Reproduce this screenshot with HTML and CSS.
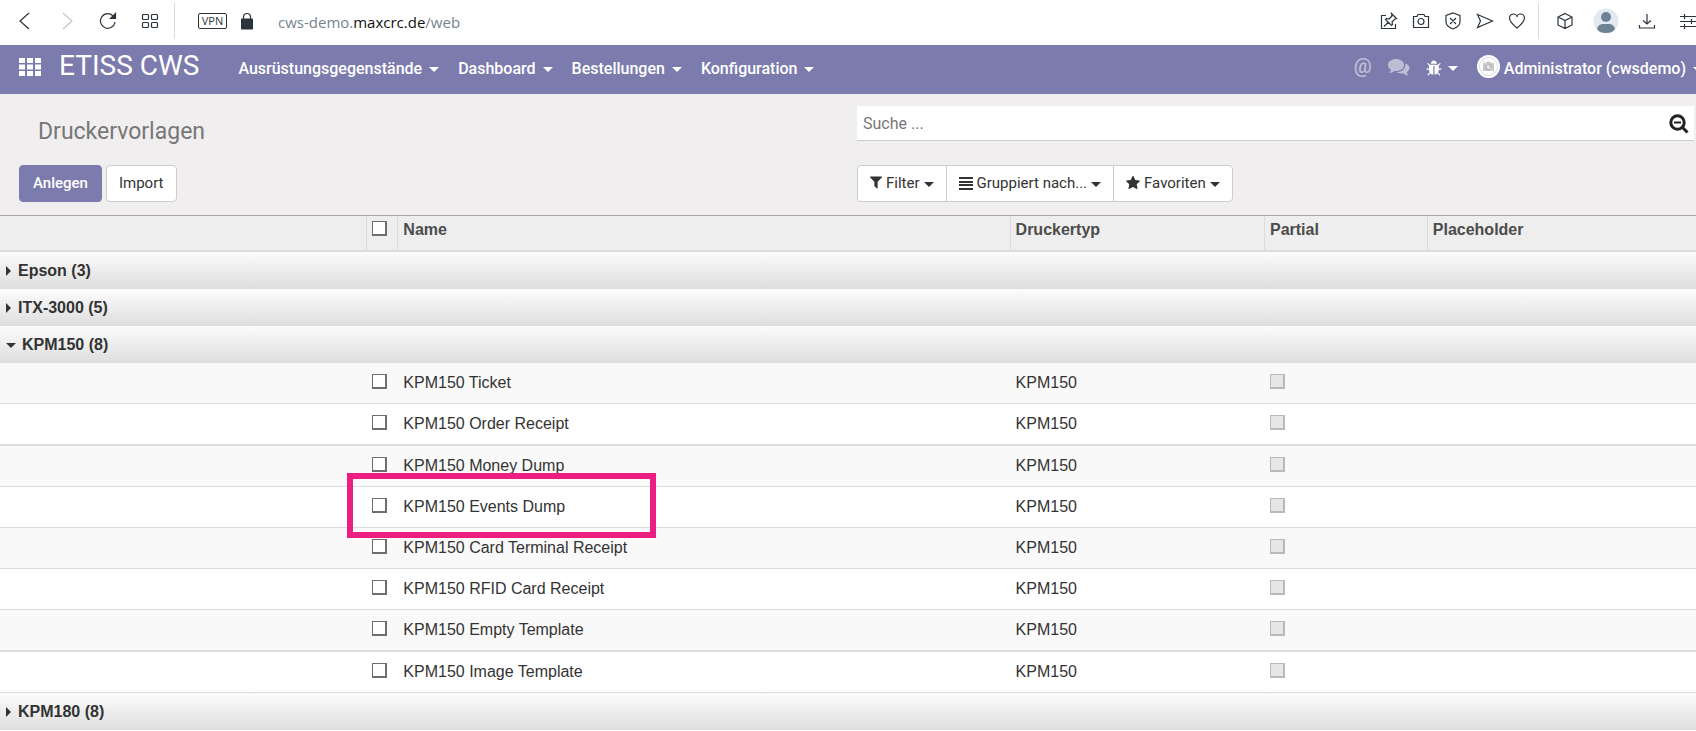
FILE: index.html
```html
<!DOCTYPE html>
<html lang="de">
<head>
<meta charset="utf-8">
<title>Druckervorlagen</title>
<link rel="stylesheet" href="styles.css">
</head>
<body>
<header class="browser">
  <button class="tool back" aria-label="Zurück"><svg width="16" height="18" viewBox="0 0 16 18"><path d="M12 1 3 9l9 8"/></svg></button>
  <button class="tool forward" aria-label="Vorwärts"><svg width="16" height="18" viewBox="0 0 16 18"><path d="m4 1 9 8-9 8"/></svg></button>
  <button class="tool reload" aria-label="Neu laden"><svg width="18" height="18" viewBox="0 0 18 18"><path d="M16 10A7.300 7.300 0 1 1 14.500 4.500"/><path class="solid" d="M16.500 1.500v5h-5z"/></svg></button>
  <button class="tool tiles" aria-label="Schnellwahl"><svg width="18" height="18" viewBox="0 0 18 18"><rect x="1.500" y="2.500" width="6" height="5" rx="1"/><rect x="10.500" y="2.500" width="6" height="5" rx="1"/><rect x="1.500" y="10.500" width="6" height="5" rx="1"/><rect x="10.500" y="10.500" width="6" height="5" rx="1"/></svg></button>
  <span class="divider"></span>
  <span class="vpn">VPN</span>
  <svg class="lock" width="12" height="18" viewBox="0 0 12 18"><rect class="solid" y="7" width="12" height="10" rx="1"/><path d="M2.500 8V5a3.500 3.500 0 0 1 7 0v3"/></svg>
  <span class="url">cws-demo.<b>maxcrc.de</b>/web</span>
  <div class="actions">
    <button class="tool" aria-label="Anheften"><svg width="18" height="18" viewBox="0 0 18 18"><path d="M6 3.500H1.500v13h14V12M11.500 1.500l5 5-1.500.5-3 3 .5 2.500-1 1-6-6 1-1L9 7l3-3zM8.500 10 4 14.500"/></svg></button>
    <button class="tool" aria-label="Schnappschuss"><svg width="18" height="18" viewBox="0 0 18 18"><path d="M1.500 4.500H5l1-2h6l1 2h3.500v11h-15z"/><circle cx="9" cy="9.500" r="3"/></svg></button>
    <button class="tool" aria-label="Werbeblocker"><svg width="18" height="18" viewBox="0 0 18 18"><path d="M9 1 16 3.500V10c0 3-3 5.500-7 7-4-1.500-7-4-7-7V3.500zM6 6l6 6M12 6l-6 6"/></svg></button>
    <button class="tool" aria-label="Senden"><svg width="18" height="18" viewBox="0 0 18 18"><path d="m1.500 2.500 15 6.500-15 6.500L4.500 9z"/></svg></button>
    <button class="tool" aria-label="Lesezeichen"><svg width="18" height="18" viewBox="0 0 18 18"><path d="M9 16C4 12 1.500 9 1.500 6a4 4 0 0 1 4-4C7.500 2 9 3.500 9 5c0-1.500 1.500-3 3.500-3a4 4 0 0 1 4 4c0 3-2.500 6-7.500 10z"/></svg></button>
  </div>
  <span class="divider"></span>
  <div class="extras">
    <button class="tool" aria-label="Erweiterungen"><svg width="18" height="18" viewBox="0 0 18 18"><path d="m9 1.500 7 3.500v8l-7 3.500L2 13V5zM2 5l7 3.500L16 5M9 8.500v8"/></svg></button>
    <button class="tool" aria-label="Profil"><svg class="avatar" width="26" height="26" viewBox="0 0 26 26"><circle class="disc" cx="13" cy="13" r="12.500"/><circle class="person" cx="13" cy="9" r="5"/><path class="person" d="M4 21c1-4 4-5 6-5h6c2 0 5 1 6 5-2 3-5 4-9 4s-7-1-9-4z"/></svg></button>
    <button class="tool" aria-label="Downloads"><svg width="18" height="18" viewBox="0 0 18 18"><path d="M9 2v10M5 8.500 9 12l4-3.500M1.500 13v3h15v-3"/></svg></button>
    <button class="tool cut" aria-label="Einstellungen"><svg width="16" height="18" viewBox="0 0 16 18"><path d="M0 4.500h16M0 9.500h16M0 14.500h16M4.500 2v5M11.500 7v5M4.500 12v5"/></svg></button>
  </div>
</header>

<nav class="navbar">
  <button class="apps" aria-label="Apps"><svg width="23" height="18" viewBox="0 0 23 18"><path d="M0 0h6v5H0zM8 0h6v5H8zM16 0h6v5h-6zM0 6.500h6v5H0zM8 6.500h6v5H8zM16 6.500h6v5h-6zM0 13h6v5H0zM8 13h6v5H8zM16 13h6v5h-6z"/></svg></button>
  <a class="brand" href="#">ETISS CWS</a>
  <div class="menu">
    <a href="#">Ausrüstungsgegenstände<i class="caret"></i></a>
    <a href="#">Dashboard<i class="caret"></i></a>
    <a href="#">Bestellungen<i class="caret"></i></a>
    <a href="#">Konfiguration<i class="caret"></i></a>
  </div>
  <div class="systray">
    <a class="at dim" href="#">@</a>
    <a class="chat dim" href="#" aria-label="Nachrichten"><svg width="22" height="18" viewBox="0 0 22 18"><path d="M8 1c4.500 0 8 2.500 8 6s-3.500 6-8 6l-1.500-.1C5 14 3 14.800 1 15c1-1 1.700-2 1.900-3.300C1 10.600 0 9 0 7c0-3.500 3.500-6 8-6z"/><path d="M17.200 5.500C20 6.300 21.500 8 21.500 10c0 1.700-1 3.200-2.600 4.200.2 1.300.9 2.300 1.900 3.300-2-.2-4-1-5.500-2.100-2.500.4-4.800 0-6.800-1.300C14 14 18 11 17.200 5.500z"/></svg></a>
    <a class="debug" href="#" aria-label="Debug"><svg width="17" height="17" viewBox="0 0 1792 1792"><path d="M1632 960q0 26-19 45t-45 19h-224q0 171-67 290l208 209q19 19 19 45t-19 45q-18 19-45 19t-45-19l-198-197q-5 5-15 13t-42 28.500-65 36.500-82 29-97 13v-896h-128v896q-51 0-101.500-13.500t-87-33-66-39-43.500-32.500l-15-14-183 207q-20 21-48 21-24 0-43-16-19-18-20.500-44.500t15.500-46.500l202-227q-58-114-58-274h-224q-26 0-45-19t-19-45 19-45 45-19h224v-294l-173-173q-19-19-19-45t19-45 45-19 45 19l173 173h844l173-173q19-19 45-19t45 19 19 45-19 45l-173 173v294h224q26 0 45 19t19 45zm-480-576h-640q0-133 93.500-226.500t226.500-93.500 226.500 93.500 93.500 226.500z"/></svg><i class="caret"></i></a>
    <a class="user" href="#"><svg width="23" height="23" viewBox="0 0 23 23"><circle cx="11.500" cy="11.500" r="11.500"/><circle class="ring" cx="11.500" cy="11.500" r="9"/><path class="cam" d="M6 8h3l1-1.500h3L14 8h3v8H6z"/><circle class="lens" cx="11.500" cy="12" r="2.500"/><path class="ring" d="m5 5 13 13"/></svg><span>Administrator (cwsdemo)</span><span class="clip"><i class="caret"></i></span></a>
  </div>
</nav>

<main>
  <section class="panel">
    <div class="side">
      <h1>Druckervorlagen</h1>
      <div class="buttons">
        <button class="btn primary">Anlegen</button>
        <button class="btn">Import</button>
      </div>
    </div>
    <div class="side right">
      <div class="search">
        <input type="text" placeholder="Suche ..." aria-label="Suche">
        <button class="find" aria-label="Erweiterte Suche"><svg width="20" height="20" viewBox="0 0 20 20"><circle cx="8.500" cy="8.500" r="6.700"/><path d="m13.500 13.500 5 5"/><path class="minus" d="M5 8.500h7"/></svg></button>
      </div>
      <div class="group">
        <button class="btn"><svg width="12" height="13" viewBox="190 256 1412 1408"><path d="M1595 295q17 41-14 70l-493 493v742q0 42-39 59-13 5-25 5-27 0-45-19l-256-256q-19-19-19-45v-486l-493-493q-31-29-14-70 17-39 59-39h1280q42 0 59 39z"/></svg>Filter<i class="caret"></i></button>
        <button class="btn"><svg width="14" height="14" viewBox="0 0 14 14"><path d="M0 1h14v2H0zM0 5h14v2H0zM0 8h14v2H0zM0 12h14v2H0z"/></svg>Gruppiert nach...<i class="caret"></i></button>
        <button class="btn"><svg width="14" height="14" viewBox="64 128 1664 1536"><path d="M1728 647q0 22-26 48l-363 354 86 500q1 7 1 20 0 21-10.500 35.500t-30.500 14.500q-19 0-40-12l-449-236-449 236q-22 12-40 12-21 0-31.500-14.500t-10.500-35.500q0-6 2-20l86-500-364-354q-25-27-25-48 0-37 56-46l502-73 225-455q19-41 49-41t49 41l225 455 502 73q56 9 56 46z"/></svg>Favoriten<i class="caret"></i></button>
      </div>
    </div>
  </section>

  <table class="list">
    <colgroup><col class="c-group"><col class="c-check"><col class="c-name"><col class="c-type"><col class="c-partial"><col></colgroup>
    <thead>
      <tr><th></th><th><input type="checkbox" aria-label="Alle auswählen"></th><th>Name</th><th>Druckertyp</th><th>Partial</th><th>Placeholder</th></tr>
    </thead>
    <tbody>
      <tr class="head"><th colspan="6"><i class="arrow"></i>Epson (3)</th></tr>
      <tr class="head"><th colspan="6"><i class="arrow"></i>ITX-3000 (5)</th></tr>
      <tr class="head"><th colspan="6"><i class="arrow open"></i>KPM150 (8)</th></tr>
    </tbody>
    <tbody class="rows">
      <tr><td></td><td><input type="checkbox" aria-label="KPM150 Ticket"></td><td>KPM150 Ticket</td><td>KPM150</td><td><input type="checkbox" aria-label="Partial" disabled></td><td></td></tr>
      <tr class="thick"><td></td><td><input type="checkbox" aria-label="KPM150 Order Receipt"></td><td>KPM150 Order Receipt</td><td>KPM150</td><td><input type="checkbox" aria-label="Partial" disabled></td><td></td></tr>
      <tr><td></td><td><input type="checkbox" aria-label="KPM150 Money Dump"></td><td>KPM150 Money Dump</td><td>KPM150</td><td><input type="checkbox" aria-label="Partial" disabled></td><td></td></tr>
      <tr><td></td><td><input type="checkbox" aria-label="KPM150 Events Dump"></td><td class="marked">KPM150 Events Dump<span class="marker"></span></td><td>KPM150</td><td><input type="checkbox" aria-label="Partial" disabled></td><td></td></tr>
      <tr><td></td><td><input type="checkbox" aria-label="KPM150 Card Terminal Receipt"></td><td>KPM150 Card Terminal Receipt</td><td>KPM150</td><td><input type="checkbox" aria-label="Partial" disabled></td><td></td></tr>
      <tr><td></td><td><input type="checkbox" aria-label="KPM150 RFID Card Receipt"></td><td>KPM150 RFID Card Receipt</td><td>KPM150</td><td><input type="checkbox" aria-label="Partial" disabled></td><td></td></tr>
      <tr class="thick"><td></td><td><input type="checkbox" aria-label="KPM150 Empty Template"></td><td>KPM150 Empty Template</td><td>KPM150</td><td><input type="checkbox" aria-label="Partial" disabled></td><td></td></tr>
      <tr><td></td><td><input type="checkbox" aria-label="KPM150 Image Template"></td><td>KPM150 Image Template</td><td>KPM150</td><td><input type="checkbox" aria-label="Partial" disabled></td><td></td></tr>
    </tbody>
    <tbody>
      <tr class="head"><th colspan="6"><i class="arrow"></i>KPM180 (8)</th></tr>
    </tbody>
  </table>
</main>
</body>
</html>
```
FILE: styles.css
```css
* { box-sizing: border-box; }
body {
  margin: 0;
  background: #fff;
  color: #333;
  font-family: Roboto, "Liberation Sans", sans-serif;
  font-size: 16px;
  line-height: 20px;
}
button { font: inherit; color: inherit; background: none; border: 0; padding: 0; cursor: pointer; }
a { color: inherit; text-decoration: none; }
svg { display: block; flex: none; }

/* Browser toolbar */
.browser { display: flex; align-items: center; height: 45px; padding-left: 17px; padding-bottom: 4px; overflow: hidden; }
.browser svg { fill: none; stroke: #2b343d; stroke-width: 1.2; }
.browser .solid { fill: #2b343d; }
.browser .forward svg { stroke: #c4c4c4; }
.forward { margin-left: 26px; }
.reload { margin-left: 24px; }
.tiles { margin-left: 24px; }
.divider { width: 1px; height: 36px; background: #dcdcdc; }
.tiles + .divider { margin-left: 15px; }
.vpn {
  margin-left: 23px; width: 29px; height: 16px;
  border: 1px solid #2b343d; border-radius: 2px;
  color: #2b343d; font: 11px/14px "Open Sans", sans-serif; text-align: center;
}
.lock { margin-left: 14px; }
.url { margin-left: 25px; padding-top: 2px; flex: 1; font-family: "Open Sans", sans-serif; font-size: 15px; color: #758491; }
.url b { font-weight: 400; color: #111; }
.actions { display: flex; gap: 14px; margin-right: 12px; }
.extras { display: flex; align-items: center; margin-left: 17px; }
.extras .tool + .tool { margin-left: 19px; }
.extras .tool.cut { margin-left: 24px; }
.browser .avatar { stroke: none; }
.browser .avatar .disc { fill: #e1eaf2; }
.browser .avatar .person { fill: #6f8294; }

/* Main navigation */
.navbar {
  display: flex; align-items: flex-start; height: 49px; padding-left: 19px;
  background: #7c7bad; color: #fff; font-weight: 500; overflow: hidden;
}
.navbar svg { fill: #fff; }
.apps { margin-top: 13px; }
.brand { margin: 4px 0 0 17px; font-size: 28px; line-height: 34px; font-weight: 400; }
.menu { display: flex; gap: 19px; margin: 14px auto 0 39px; }
.caret {
  display: inline-block; vertical-align: middle; margin-left: 7px;
  border: 5px solid transparent; border-top-color: currentColor; border-bottom: 0;
}
.systray { display: flex; align-items: flex-start; }
.systray a { display: flex; align-items: center; }
.dim { opacity: .5; }
.at { margin-top: 11px; font-size: 20px; }
.chat { margin: 13px 0 0 16px; }
.debug { margin: 15px 0 0 16px; }
.debug .caret { margin-left: 5px; }
.user { margin: 9px 0 0 19px; }
.user span { margin: 5px 0 0 4px; line-height: 20px; }
.user .clip { width: 3px; margin-left: 7px; overflow: hidden; }
.clip .caret { margin-left: 0; }
.user .ring { fill: none; stroke: #dcdcdc; }
.user .cam { fill: #c6c6c6; }
.user .lens { fill: #e6e6e6; stroke: #aaa; }

/* Control panel */
.panel { display: grid; grid-template-columns: 1fr 1fr; padding-bottom: 13px; background: #f0eeee; }
.side { padding: 12px 0 0 19px; }
.right { padding: 12px 2px 0 9px; }
h1 { margin: 0 0 0 19px; padding-top: 12px; font-size: 23px; line-height: 28px; font-weight: 400; color: #777; }
.buttons { display: flex; gap: 4px; margin-top: 19px; }
.btn {
  display: inline-flex; align-items: center; height: 37px; padding: 0 12px 2px;
  border: 1px solid #ccc; border-radius: 4px; background: #fff; font-size: 15px; color: #333;
}
.primary { padding: 0 13px 2px; background: #7c7bad; border-color: #7c7bad; color: #fff; font-weight: 500; }
.search { display: flex; align-items: center; height: 35px; padding: 2px 5px 0 6px; background: #fff; border-bottom: 1px solid #ccc; }
.search input { flex: 1; padding: 0; border: 0; outline: 0; font: inherit; color: #333; }
.search input::placeholder { color: #777; opacity: 1; }
.find svg { fill: none; stroke: #222; stroke-width: 3; }
.find .minus { stroke-width: 2; }
.group { display: flex; margin-top: 24px; }
.group .btn { border-radius: 0; }
.group .btn + .btn { margin-left: -1px; }
.group .btn:first-child { border-radius: 4px 0 0 4px; }
.group .btn:last-child { border-radius: 0 4px 4px 0; }
.group svg { margin-right: 4px; fill: #333; }
.group .caret { margin: 3px 0 0 4px; }

/* List */
.list { width: 100%; table-layout: fixed; border-collapse: separate; border-spacing: 0; border-top: 1px solid #a9a6a6; font-family: "Liberation Sans", Arial, sans-serif; }
.c-group { width: 21.6%; }
.c-check { width: 31px; }
.c-name { width: 36.1%; }
.c-type { width: 15%; }
.c-partial { width: 9.6%; }
th, td { padding: 0 6px; text-align: left; white-space: nowrap; }
thead th { height: 36px; padding-top: 4px; vertical-align: top; background: #eee; border-bottom: 2px solid #dcdcdc; color: #4c4c4c; }
thead th + th { border-left: 1px solid #dcdcdc; padding-left: 5px; }
.head th { height: 37px; background: linear-gradient(#fcfcfc, #dedede); }
.arrow {
  display: inline-block; margin-right: 7px;
  border: 5px solid transparent; border-left-color: #333; border-right: 0; vertical-align: middle;
}
.arrow.open { margin-right: 6px; border: 5px solid transparent; border-top-color: #333; border-bottom: 0; }
td { height: 41px; border-bottom: 1px solid #dcdcdc; }
.thick td { height: 42px; border-bottom-width: 2px; }
.rows tr:nth-child(odd) { background: #f9f9f9; }
input[type="checkbox"] {
  appearance: none; display: block; width: 15px; height: 15px; margin: 0;
  border: 2px solid #6e6e6e; border-width: 1px 2px 2px 1px; background: #fff;
}
thead input[type="checkbox"] { margin-top: 1px; }
.rows input[type="checkbox"] { margin-bottom: 3px; }
input[type="checkbox"]:disabled { border-color: #b9b9b9; background: #e6e6e6; }
.marked { position: relative; }
.marker { position: absolute; left: -50px; top: -14px; width: 309px; height: 65px; border: 6px solid #ed1e81; }
```
